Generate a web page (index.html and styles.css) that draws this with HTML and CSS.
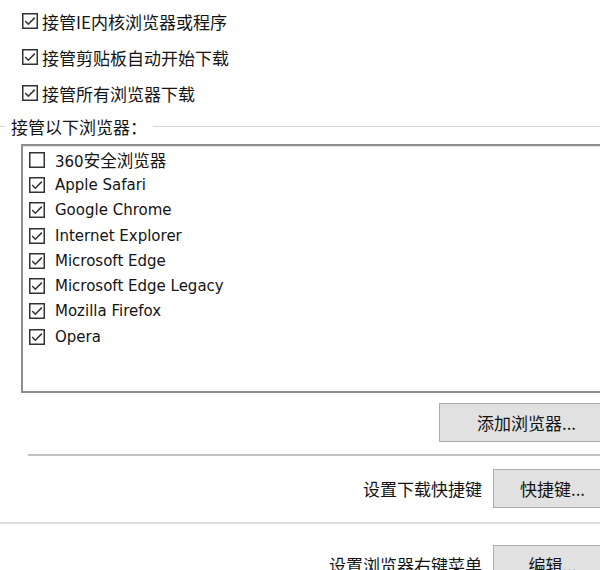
FILE: index.html
```html
<!DOCTYPE html>
<html lang="zh-CN">
<head>
<meta charset="utf-8">
<title>浏览器设置</title>
<link rel="stylesheet" href="styles.css">
</head>
<body>
<div class="page">
  <div class="options">
    <div class="opt">
      <svg class="cb" viewBox="0 0 16 16"><rect x="0.75" y="0.75" width="14.5" height="14.5" fill="#fff" stroke="#333" stroke-width="1.5"/><polyline points="3.2,8 6.3,11.2 12.8,4.6" fill="none" stroke="#333" stroke-width="1.5"/></svg>
      <span>接管IE内核浏览器或程序</span>
    </div>
    <div class="opt">
      <svg class="cb" viewBox="0 0 16 16"><rect x="0.75" y="0.75" width="14.5" height="14.5" fill="#fff" stroke="#333" stroke-width="1.5"/><polyline points="3.2,8 6.3,11.2 12.8,4.6" fill="none" stroke="#333" stroke-width="1.5"/></svg>
      <span>接管剪贴板自动开始下载</span>
    </div>
    <div class="opt">
      <svg class="cb" viewBox="0 0 16 16"><rect x="0.75" y="0.75" width="14.5" height="14.5" fill="#fff" stroke="#333" stroke-width="1.5"/><polyline points="3.2,8 6.3,11.2 12.8,4.6" fill="none" stroke="#333" stroke-width="1.5"/></svg>
      <span>接管所有浏览器下载</span>
    </div>
  </div>

  <div class="group-label">
    <span class="gl-line short"></span>
    <span class="gl-text">接管以下浏览器：</span>
    <span class="gl-line long"></span>
  </div>

  <div class="listbox">
    <div class="item">
      <svg class="cb" viewBox="0 0 16 16"><rect x="0.75" y="0.75" width="14.5" height="14.5" fill="#fff" stroke="#333" stroke-width="1.5"/></svg>
      <span>360<span class="cjk">安全浏览器</span></span>
    </div>
    <div class="item">
      <svg class="cb" viewBox="0 0 16 16"><rect x="0.75" y="0.75" width="14.5" height="14.5" fill="#fff" stroke="#333" stroke-width="1.5"/><polyline points="3.2,8 6.3,11.2 12.8,4.6" fill="none" stroke="#333" stroke-width="1.5"/></svg>
      <span>Apple Safari</span>
    </div>
    <div class="item">
      <svg class="cb" viewBox="0 0 16 16"><rect x="0.75" y="0.75" width="14.5" height="14.5" fill="#fff" stroke="#333" stroke-width="1.5"/><polyline points="3.2,8 6.3,11.2 12.8,4.6" fill="none" stroke="#333" stroke-width="1.5"/></svg>
      <span>Google Chrome</span>
    </div>
    <div class="item">
      <svg class="cb" viewBox="0 0 16 16"><rect x="0.75" y="0.75" width="14.5" height="14.5" fill="#fff" stroke="#333" stroke-width="1.5"/><polyline points="3.2,8 6.3,11.2 12.8,4.6" fill="none" stroke="#333" stroke-width="1.5"/></svg>
      <span>Internet Explorer</span>
    </div>
    <div class="item">
      <svg class="cb" viewBox="0 0 16 16"><rect x="0.75" y="0.75" width="14.5" height="14.5" fill="#fff" stroke="#333" stroke-width="1.5"/><polyline points="3.2,8 6.3,11.2 12.8,4.6" fill="none" stroke="#333" stroke-width="1.5"/></svg>
      <span>Microsoft Edge</span>
    </div>
    <div class="item">
      <svg class="cb" viewBox="0 0 16 16"><rect x="0.75" y="0.75" width="14.5" height="14.5" fill="#fff" stroke="#333" stroke-width="1.5"/><polyline points="3.2,8 6.3,11.2 12.8,4.6" fill="none" stroke="#333" stroke-width="1.5"/></svg>
      <span>Microsoft Edge Legacy</span>
    </div>
    <div class="item">
      <svg class="cb" viewBox="0 0 16 16"><rect x="0.75" y="0.75" width="14.5" height="14.5" fill="#fff" stroke="#333" stroke-width="1.5"/><polyline points="3.2,8 6.3,11.2 12.8,4.6" fill="none" stroke="#333" stroke-width="1.5"/></svg>
      <span>Mozilla Firefox</span>
    </div>
    <div class="item">
      <svg class="cb" viewBox="0 0 16 16"><rect x="0.75" y="0.75" width="14.5" height="14.5" fill="#fff" stroke="#333" stroke-width="1.5"/><polyline points="3.2,8 6.3,11.2 12.8,4.6" fill="none" stroke="#333" stroke-width="1.5"/></svg>
      <span>Opera</span>
    </div>
  </div>

  <div class="add-row">
    <button class="btn btn-add">添加浏览器...</button>
  </div>

  <div class="sep sep-mid"></div>

  <div class="set-row">
    <span class="set-label">设置下载快捷键</span>
    <button class="btn btn-small">快捷键...</button>
  </div>

  <div class="sep sep-full"></div>

  <div class="set-row last">
    <span class="set-label">设置浏览器右键菜单</span>
    <button class="btn btn-small">编辑...</button>
  </div>
</div>
</body>
</html>
```

FILE: styles.css
```css
html, body {
  margin: 0;
  padding: 0;
  background: #ffffff;
  overflow: hidden;
}

body {
  width: 600px;
  height: 570px;
  font-family: "Noto Sans CJK SC", "DejaVu Sans", sans-serif;
  font-size: 17px;
  color: #141414;
}

.page {
  display: flex;
  flex-direction: column;
}

.options {
  padding: 3px 0 0 22px;
  display: flex;
  flex-direction: column;
}

.opt {
  height: 36px;
  display: flex;
  align-items: center;
  gap: 4px;
}

.cb {
  width: 16px;
  height: 16px;
  flex: none;
}

.group-label {
  height: 31px;
  display: flex;
  align-items: center;
  gap: 6px;
}

.gl-line {
  height: 1px;
  background: #d4d4d4;
}

.gl-line.short {
  width: 5px;
  flex: none;
}

.gl-line.long {
  flex: 1;
}

.gl-text {
  white-space: nowrap;
  line-height: 20px;
}

.listbox {
  margin-left: 21px;
  margin-top: 2px;
  height: 244px;
  border: 2px solid #8e8e8e;
  border-right: none;
  box-shadow: inset 0 1px 0 #e6e6e6;
  padding: 1px 0 0 6px;
  font-family: "DejaVu Sans", "Noto Sans CJK SC", sans-serif;
  font-size: 15px;
}

.item {
  height: 25.3px;
  display: flex;
  align-items: center;
  gap: 10px;
}

.cjk {
  font-family: "Noto Sans CJK SC", sans-serif;
  font-size: 16.5px;
}

.add-row {
  display: flex;
  justify-content: flex-end;
  margin-top: 10px;
  margin-right: -14px;
}

.btn {
  font-family: "Noto Sans CJK SC", sans-serif;
  font-size: 17px;
  color: #141414;
  background: #e1e1e1;
  border: 1px solid #adadad;
  padding: 0;
  height: 39px;
  line-height: 37px;
}

.btn-add {
  width: 175px;
}

.btn-small {
  width: 119px;
}

.sep {
  height: 2px;
}

.sep-mid {
  margin: 12px 0 0 28px;
  background: #c2c2c2;
}

.sep-full {
  margin-top: 14px;
  background: #dedede;
}

.set-row {
  display: flex;
  justify-content: flex-end;
  align-items: center;
  gap: 11px;
  margin-top: 13px;
  margin-right: -12px;
}

.set-row.last {
  margin-top: 21px;
}

.set-label {
  white-space: nowrap;
}
```
